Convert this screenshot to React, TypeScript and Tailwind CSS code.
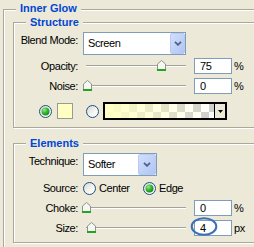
import React from "react";

function Radio({ checked = false }: { checked?: boolean }) {
  return (
    <svg width="13" height="13" viewBox="0 0 13 13" className="block shrink-0">
      <defs>
        <linearGradient id="rbg" x1="0" y1="0" x2="1" y2="1">
          <stop offset="0" stopColor="#D6D6CF" />
          <stop offset="0.6" stopColor="#F6F6F3" />
          <stop offset="1" stopColor="#FFFFFF" />
        </linearGradient>
        <radialGradient id="rdot" cx="0.35" cy="0.3" r="0.75">
          <stop offset="0" stopColor="#9DEB95" />
          <stop offset="0.5" stopColor="#38B738" />
          <stop offset="1" stopColor="#168A16" />
        </radialGradient>
      </defs>
      <circle cx="6.5" cy="6.5" r="6" fill="url(#rbg)" stroke="#1C5180" />
      {checked && <circle cx="6.5" cy="6.5" r="4" fill="url(#rdot)" />}
    </svg>
  );
}

function Thumb() {
  return (
    <svg width="9" height="11" viewBox="0 0 9 11" className="block">
      <path d="M0.5 4 L4.5 0.5 L8.5 4 V10.5 H0.5 Z" fill="#F6F6F2" stroke="#8F9290" />
      <rect x="0" y="9" width="9" height="2" fill="#22A322" />
    </svg>
  );
}

function Slider({ thumb }: { thumb: string }) {
  return (
    <div className="relative ml-[4px] h-[16px] w-[104px] shrink-0">
      <div className="absolute left-[4px] right-0 top-[7px] h-[2px] border-t border-[#A3A39B] bg-white" />
      <div className={`absolute top-[2px] ${thumb}`}>
        <Thumb />
      </div>
    </div>
  );
}

function NumInput({ value }: { value: string }) {
  return (
    <div className="ml-[8px] flex h-[16px] w-[38px] shrink-0 items-center border border-[#7F9DB9] bg-white pl-[5px]">
      {value}
    </div>
  );
}

function Select({ value, width, btn }: { value: string; width: string; btn: string }) {
  return (
    <div className={`ml-[5px] flex h-[23px] shrink-0 border border-[#7F9DB9] bg-white ${width}`}>
      <span className="flex-1 self-center pl-[4px]">{value}</span>
      <div
        className={`flex items-center justify-center rounded-[2px] border border-[#BACBF2] bg-linear-to-br from-[#D2DEFC] to-[#B0C4F5] ${btn}`}
      >
        <svg width="8" height="5" viewBox="0 0 8 5" className="block">
          <path d="M1 0.8 L4 3.8 L7 0.8" fill="none" stroke="#4D6185" strokeWidth="1.8" />
        </svg>
      </div>
    </div>
  );
}

function Label({ children }: { children: React.ReactNode }) {
  return <span className="w-[64px] shrink-0 text-right">{children}</span>;
}

function Group({
  title,
  className = "",
  children,
}: {
  title: string;
  className?: string;
  children: React.ReactNode;
}) {
  return (
    <div
      className={`relative w-[300px] border border-[#ACA899] shadow-[inset_1px_1px_0_#fff,1px_1px_0_#fff] ${className}`}
    >
      <span className="absolute -top-[7px] left-[12px] bg-[#ECE9D8] px-[4px] font-bold tracking-normal text-[#0046D5]">
        {title}
      </span>
      {children}
    </div>
  );
}

export default function App() {
  return (
    <div className="relative h-[247px] w-[254px] overflow-hidden bg-[#ECE9D8] font-['Liberation_Sans',Arial,sans-serif] text-[11px] leading-[13px] tracking-[-0.4px] text-black">
      <div className="relative ml-[3px] mt-[9px] h-[300px] w-[320px] border-l border-t border-[#ACA899] pl-[9px] pt-[12px] shadow-[inset_1px_1px_0_#fff]">
        <span className="absolute -top-[8px] left-[12px] bg-[#ECE9D8] px-[4px] font-bold tracking-normal text-[#0046D5]">
          Inner Glow
        </span>

        <Group title="Structure" className="pb-[7px] pt-[9px]">
          <div className="flex h-[23px] items-start">
            <span className="mt-[2px] w-[64px] shrink-0 text-right">Blend Mode:</span>
            <Select value="Screen" width="w-[103px]" btn="w-[15px]" />
          </div>
          <div className="mt-[3px] flex h-[16px] items-center">
            <Label>Opacity:</Label>
            <Slider thumb="left-[75px]" />
            <NumInput value="75" />
            <span className="ml-[2px]">%</span>
          </div>
          <div className="mt-[4px] flex h-[16px] items-center">
            <Label>Noise:</Label>
            <Slider thumb="left-[1px]" />
            <NumInput value="0" />
            <span className="ml-[2px]">%</span>
          </div>
          <div className="mt-[8px] flex h-[18px] items-center pl-[25px]">
            <Radio checked />
            <div className="ml-[5px] h-[16px] w-[16px] border border-[#9A9A92] bg-[#FFFFC4]" />
            <div className="ml-[13px]">
              <Radio />
            </div>
            <div className="ml-[4px] flex h-[18px] w-[124px] border-2 border-black">
              <div className="h-full flex-1 bg-[conic-gradient(#CDCDCD_25%,#FFFFFF_0_50%,#CDCDCD_0_75%,#FFFFFF_0)] bg-[length:16px_16px]">
                <div className="h-full w-full bg-linear-to-r from-[#FFFFC4] to-[#FFFFC400]" />
              </div>
              <div className="flex w-[11px] items-center justify-center border-l border-black bg-[#ECE9D8]">
                <svg width="5" height="3" viewBox="0 0 5 3" className="block">
                  <path d="M0 0 H5 L2.5 3 Z" fill="#000" />
                </svg>
              </div>
            </div>
          </div>
        </Group>

        <Group title="Elements" className="mt-[15px] pb-[6px] pt-[9px]">
          <div className="flex h-[23px] items-start">
            <span className="mt-[2px] w-[64px] shrink-0 text-right">Technique:</span>
            <Select value="Softer" width="w-[74px]" btn="w-[18px]" />
          </div>
          <div className="mt-[4px] flex h-[16px] items-center">
            <Label>Source:</Label>
            <div className="ml-[5px] flex w-[60px] shrink-0 items-center">
              <Radio />
              <span className="ml-[3px]">Center</span>
            </div>
            <Radio checked />
            <span className="ml-[3px]">Edge</span>
          </div>
          <div className="mt-[4px] flex h-[16px] items-center">
            <Label>Choke:</Label>
            <Slider thumb="left-[0px]" />
            <NumInput value="0" />
            <span className="ml-[2px]">%</span>
          </div>
          <div className="mt-[4px] flex h-[16px] items-center">
            <Label>Size:</Label>
            <Slider thumb="left-[5px]" />
            <div className="relative">
              <NumInput value="4" />
              <svg
                width="28"
                height="20"
                viewBox="0 0 28 20"
                className="pointer-events-none absolute left-[4px] top-[-3px]"
              >
                <ellipse cx="14" cy="9.5" rx="12.3" ry="8.3" fill="none" stroke="#3A6FB8" strokeWidth="2" />
              </svg>
            </div>
            <span className="ml-[2px]">px</span>
          </div>
        </Group>
      </div>
    </div>
  );
}
